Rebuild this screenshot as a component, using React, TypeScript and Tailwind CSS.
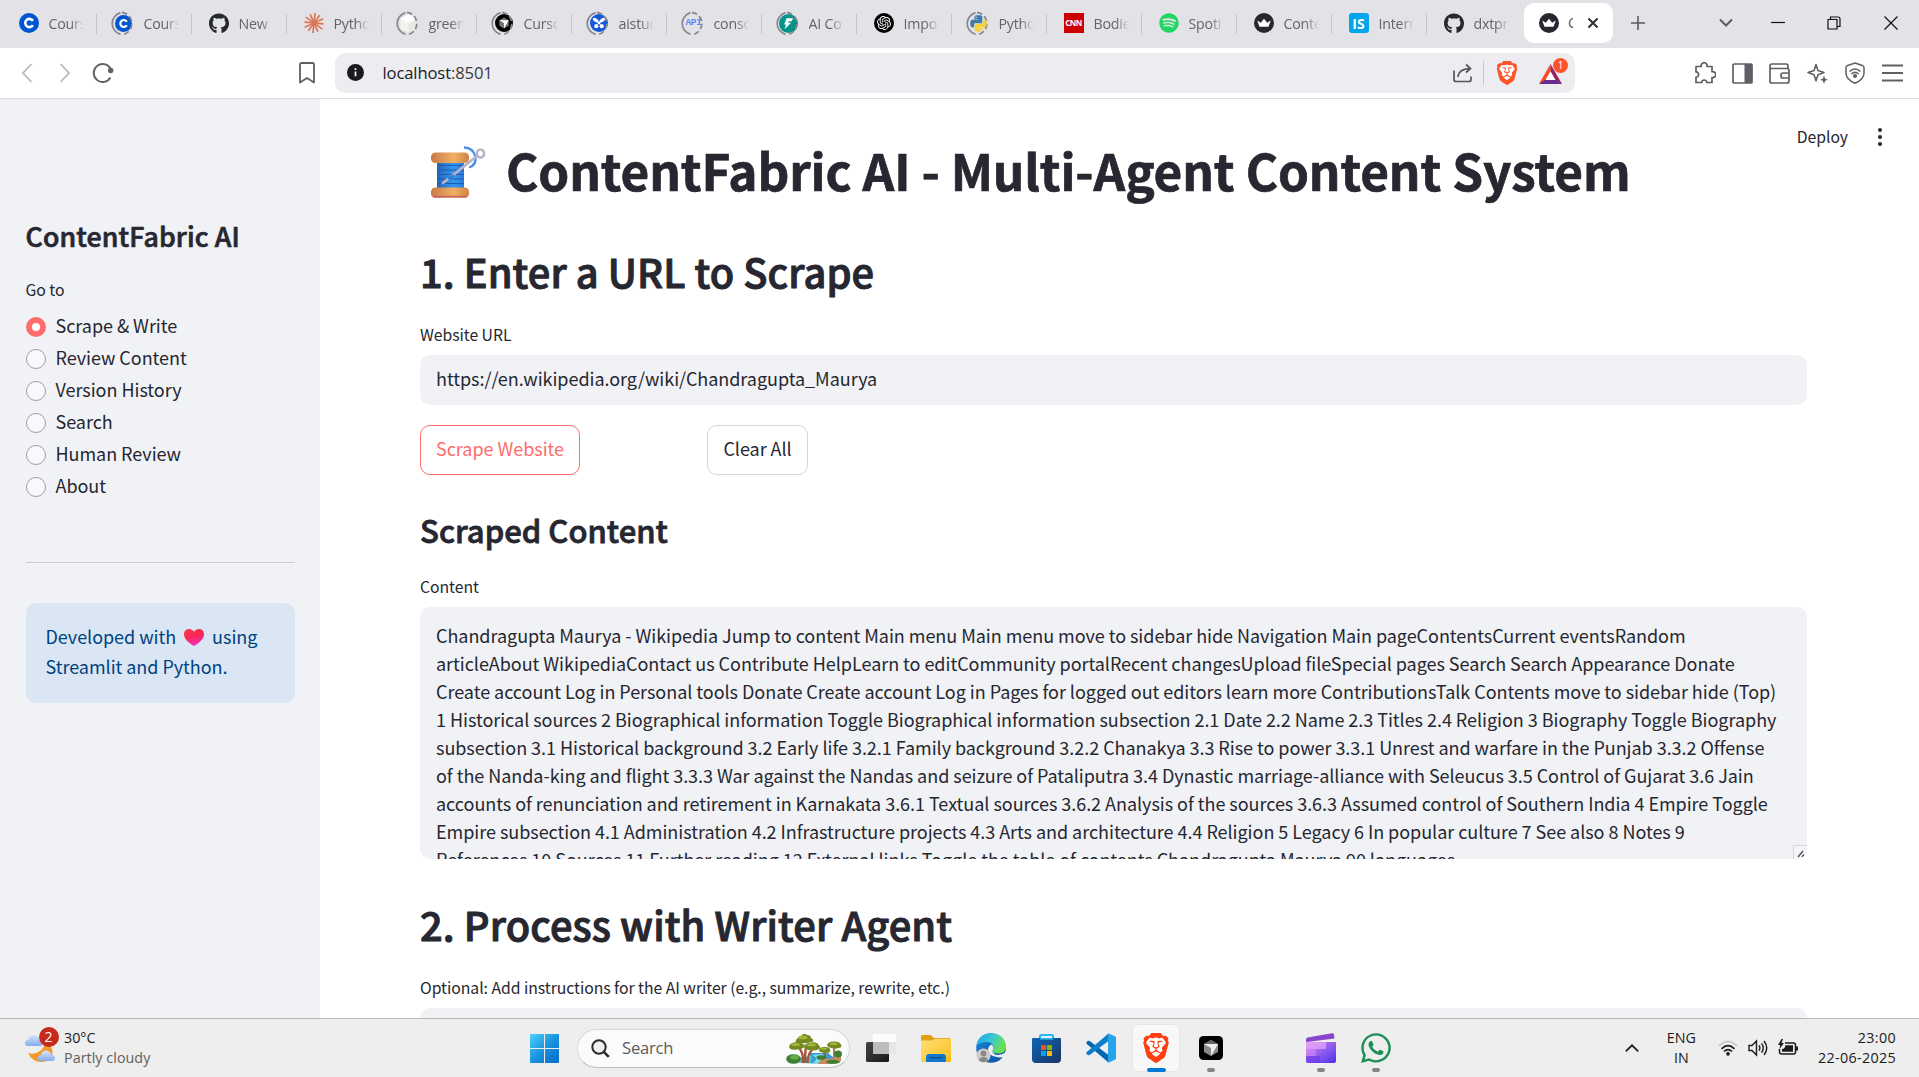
import type { ReactNode } from "react";
import { FaGithub, FaSpotify, FaWhatsapp, FaPython } from "react-icons/fa";
import { SiOpenai, SiBrave } from "react-icons/si";

/* ---------- favicons ---------- */

function CourseraIcon({ small }: { small?: boolean }) {
  return (
    <svg viewBox="0 0 20 20" className={small ? "size-[17px]" : "size-5"}>
      <circle cx="10" cy="10" r="10" fill="#0056d2" />
      <path d="M13.9 12.1A4.1 4.1 0 1 1 13.9 7.9" fill="none" stroke="#fff" strokeWidth="2.6" />
    </svg>
  );
}

function ClaudeIcon() {
  const rays = [0, 30, 60, 90, 120, 150, 180, 210, 240, 270, 300, 330];
  return (
    <svg viewBox="0 0 20 20" className="size-5">
      {rays.map((a, i) => (
        <line key={a} x1="10" y1="9" x2="10" y2={i % 2 ? 1 : 0.4} stroke="#d97757" strokeWidth="1.7" strokeLinecap="round" transform={`rotate(${a + 6} 10 10)`} />
      ))}
    </svg>
  );
}

function CubeIcon() {
  return (
    <svg viewBox="0 0 20 20" className="size-[19px]">
      <path d="M10 .5l8.500 4.500v10L10 19.500 1.500 15V5z" fill="#f4f3ef" />
      <path d="M10 .5l8.500 4.500L10 9.500 1.500 5z" fill="#fff" />
      <path d="M10 9.500L18.500 5v10L10 19.500z" fill="#e9e8e2" />
    </svg>
  );
}

function CursorDisc() {
  return (
    <svg viewBox="0 0 20 20" className="size-[18px]">
      <circle cx="10" cy="10" r="10" fill="#000" />
      <path d="M10 4l5.200 3v6L10 16l-5.200-3V7z" fill="#777" />
      <path d="M4.800 7h10.400L10 16v-6z" fill="#fff" />
    </svg>
  );
}

function AiStudioIcon() {
  return (
    <svg viewBox="0 0 20 20" className="size-[18px]">
      <circle cx="10" cy="10" r="10" fill="#1257d8" />
      <g fill="#fff">
        <ellipse cx="6.300" cy="6.800" rx="3.600" ry="1.900" transform="rotate(35 6.300 6.800)" />
        <ellipse cx="13.700" cy="6.800" rx="3.600" ry="1.900" transform="rotate(-35 13.700 6.800)" />
        <circle cx="7" cy="13.500" r="2.300" />
        <circle cx="13" cy="13.500" r="2.300" />
        <circle cx="10" cy="10" r="1.600" />
      </g>
    </svg>
  );
}

function BoltIcon() {
  return (
    <svg viewBox="0 0 20 20" className="size-[19px]">
      <circle cx="10" cy="10" r="10" fill="#059487" />
      <path d="M8 4.500h7l-1.800 3.200h-3l-.4 1.500h3l-7 6.800 1.600-5h-2z" fill="#fff" />
    </svg>
  );
}

function CrownIcon() {
  return (
    <svg viewBox="0 0 20 20" className="size-5">
      <circle cx="10" cy="10" r="10" fill="#262730" />
      <path d="M3.200 7.500l3.600 2.200L10 5.800l3.200 3.900 3.600-2.200-2.300 6.300h-9z" fill="#fff" />
    </svg>
  );
}

function PythonIcon() {
  return (
    <div className="relative size-[19px]">
      <FaPython className="absolute inset-0 size-[19px] text-[#3d7ab0] [clip-path:polygon(0_0,100%_0,100%_24%,72%_24%,72%_50%,28%_50%,28%_76%,0_76%)]" />
      <FaPython className="absolute inset-0 size-[19px] text-[#fbd03d] [clip-path:polygon(100%_24%,72%_24%,72%_50%,28%_50%,28%_76%,10%_76%,10%_100%,100%_100%)]" />
    </div>
  );
}

function Ring({ children }: { children: ReactNode }) {
  return (
    <div className="relative flex size-5 items-center justify-center">
      <svg viewBox="0 0 25 25" className="absolute -left-[2.5px] -top-[2.5px] size-[25px] max-w-none">
        <path d="M9.500 1.600A11.300 11.300 0 0 0 9.500 23.400" fill="none" stroke="#85858c" strokeWidth="1.700" />
        <path d="M11 1.300A11.300 11.300 0 0 1 11 23.700" fill="none" stroke="#85858c" strokeWidth="1.700" strokeDasharray="5.500 2.700" />
      </svg>
      {children}
    </div>
  );
}

const tabs: { label: string; icon: ReactNode }[] = [
  { label: "Cours", icon: <CourseraIcon /> },
  { label: "Cours", icon: <Ring><CourseraIcon small /></Ring> },
  { label: "New", icon: <FaGithub className="size-[21px] text-[#24292f]" /> },
  { label: "Pytho", icon: <ClaudeIcon /> },
  { label: "green", icon: <Ring><CubeIcon /></Ring> },
  { label: "Curso", icon: <Ring><CursorDisc /></Ring> },
  { label: "aistud", icon: <Ring><AiStudioIcon /></Ring> },
  { label: "conso", icon: <Ring><span className="font-['Liberation_Mono'] text-[9.500px] font-bold tracking-[-0.3px] text-[#5b86f7]">API</span></Ring> },
  { label: "AI Co", icon: <Ring><BoltIcon /></Ring> },
  { label: "Impo", icon: <div className="flex size-5 items-center justify-center rounded-full bg-black"><SiOpenai className="size-[14px] text-white" /></div> },
  { label: "Pytho", icon: <Ring><PythonIcon /></Ring> },
  { label: "Bodie", icon: <div className="flex size-5 items-center justify-center bg-[#cc0000] text-[8px] font-bold tracking-[-0.6px] text-white">CNN</div> },
  { label: "Spoti", icon: <FaSpotify className="size-5 text-[#1ed760]" /> },
  { label: "Conte", icon: <CrownIcon /> },
  { label: "Intern", icon: <div className="flex size-5 items-center justify-center rounded-[3px] bg-[#00a5ec] text-[14px] font-bold text-white">IS</div> },
  { label: "dxtpr", icon: <FaGithub className="size-[21px] text-[#24292f]" /> },
];

function TabStrip() {
  return (
    <div className="flex h-12 items-center bg-[#e3e2e7] font-['Open_Sans',sans-serif]">
      {tabs.map((t, i) => (
        <div key={i} className="flex w-[95px] items-center">
          <div className="mb-px ml-[18.500px] flex size-5 items-center justify-center">{t.icon}</div>
          <div className="mb-px ml-2.5 w-[35px] overflow-hidden whitespace-nowrap text-[14.200px] tracking-[-0.2px] text-[#63636b] [mask-image:linear-gradient(to_right,black_62%,transparent_100%)]">{t.label}</div>
          <div className={i === 15 ? "hidden" : "ml-auto mr-[-1.500px] h-5 w-px bg-[#c6c5cb]"} />
        </div>
      ))}
      <div className="ml-1 mb-[2px] flex h-10 w-[89px] items-center rounded-[10px] bg-white">
        <div className="ml-[15px]"><CrownIcon /></div>
        <div className="ml-[9px] w-[5px] overflow-hidden text-[14.200px] text-[#55555c]">C</div>
        <svg viewBox="0 0 12 12" className="ml-[13.500px] size-3"><path d="M1.500 1.500l9 9m0-9l-9 9" stroke="#2e2f33" strokeWidth="2" /></svg>
      </div>
      <svg viewBox="0 0 14 14" className="mb-[2px] ml-[18px] w-[14px]"><path d="M7 0v14M0 7h14" stroke="#5a5a61" strokeWidth="1.600" /></svg>
      <svg viewBox="0 0 14 10" className="mb-[2px] ml-[74px] w-[14px]"><path d="M1 1.500l6 6 6-6" fill="none" stroke="#5a5a61" strokeWidth="2" /></svg>
      <svg viewBox="0 0 14 14" className="mb-[4px] ml-[37.500px] w-[14px]"><path d="M0 7.500h14" stroke="#111" strokeWidth="1.200" /></svg>
      <svg viewBox="0 0 14 14" className="mb-[2px] ml-[42px] w-[14px]"><path d="M1 3.500h9v9.500h-9zM3.500 3.500v-2.500h7.500q2 0 2 2v7.500h-2.800" fill="none" stroke="#111" strokeWidth="1.200" /></svg>
      <svg viewBox="0 0 14 14" className="mb-[2px] ml-[43.500px] w-[14px]"><path d="M.5.5l13 13m0-13l-13 13" stroke="#111" strokeWidth="1.200" /></svg>
    </div>
  );
}

/* ---------- toolbar ---------- */

function Cell({ className, children }: { className: string; children: ReactNode }) {
  return <div className={`flex h-full shrink-0 items-center justify-center ${className}`}>{children}</div>;
}

function Toolbar() {
  return (
    <div className="flex h-[51px] items-center border-b border-[#dddde0] bg-white">
      <Cell className="ml-2 w-[38px]"><svg viewBox="0 0 12 20" className="w-3" fill="none" stroke="#b9b9bd" strokeWidth="1.800"><path d="M10.500 1L2 10l8.500 9" /></svg></Cell>
      <Cell className="w-[38px]"><svg viewBox="0 0 12 20" className="w-3" fill="none" stroke="#b9b9bd" strokeWidth="1.800"><path d="M1.500 1L10 10l-8.500 9" /></svg></Cell>
      <Cell className="w-[37px]">
        <svg viewBox="0 0 22 22" className="w-[22px]" fill="none" stroke="#5f6066" strokeWidth="1.900"><path d="M18.500 15.500A9 9 0 1 1 18.500 6.500" /><circle cx="18.700" cy="8.500" r="2.700" fill="#5f6066" stroke="none" /></svg>
      </Cell>
      <Cell className="ml-[165.500px] w-10">
        <svg viewBox="0 0 16 22" className="w-4" fill="none" stroke="#5f6066" strokeWidth="1.800"><path d="M1 2.500q0-1.500 1.500-1.500h11q1.500 0 1.500 1.500v18l-7-4.500-7 4.500z" strokeLinejoin="round" /></svg>
      </Cell>
      <div className="mb-[1px] ml-[8.500px] flex h-10 w-[1240px] items-center rounded-[10px] bg-[#edecf1]">
        <svg viewBox="0 0 16 16" className="ml-[11.500px] size-[17px]"><circle cx="8" cy="8" r="8" fill="#1b1b1f" /><path d="M8 7v4.500M8 4v1.600" stroke="#fff" strokeWidth="1.600" /></svg>
        <span className="ml-[19px] pt-px font-['Open_Sans',sans-serif] text-[16.600px] tracking-[-0.12px] text-[#3c3c42]"><span className="text-[#1b1b1f]">localhost</span>:8501</span>
        <svg viewBox="0 0 20 20" className="ml-auto w-5" fill="none" stroke="#55565c" strokeWidth="1.700"><path d="M1 7.500v9q0 2 2 2h13q2 0 2-2v-3M5 14q.5-8 12-8.500M13 1.500l4.500 4-4.500 4" /></svg>
        <div className="ml-[10px] h-6 w-px bg-[#c8c7cc]" />
        <div className="relative ml-[13px] flex h-[22px] w-5 items-center justify-center">
          <div className="absolute inset-x-[4px] inset-y-[3px] bg-white" />
          <SiBrave className="relative h-[24px] w-[24px] shrink-0 text-[#fb542b]" />
        </div>
        <div className="relative ml-[22px] mr-[13px] h-[22px] w-[23px]">
          <svg viewBox="0 0 23 22" className="mt-[1px] w-[23px]">
            <path d="M11.500 1L0 21l6.500-3.500 5-9z" fill="#ff4724" />
            <path d="M11.500 1L23 21l-6.500-3.500-5-9z" fill="#9e1f63" />
            <path d="M0 21h23l-6.500-4.500h-10z" fill="#662d91" />
            <path d="M11.500 8.500l5 8.500h-10z" fill="#fff" />
          </svg>
          <span className="absolute -top-[4px] left-[14px] flex size-[15px] items-center justify-center rounded-full bg-[#fb542b] font-['Open_Sans'] text-[10px] leading-none text-white">1</span>
        </div>
      </div>
      <div className="ml-[111px] flex h-full text-[#5f6066]">
        <Cell className="w-[37.500px]">
          <svg viewBox="0 0 22 22" className="w-[22px]" fill="none" stroke="currentColor" strokeWidth="1.700" strokeLinejoin="round"><path d="M2 4.500h5.200a3 3 0 1 1 5.800 0h5v5.200a3 3 0 1 1 0 5.800v5h-5.200a2.300 2.300 0 1 0-5 0H2v-5.300a2.600 2.600 0 1 0 0-5.300z" /></svg>
        </Cell>
        <Cell className="w-[37.500px]"><svg viewBox="0 0 21 21" className="w-[21px]"><rect x="1" y="1" width="19" height="19" rx="1" fill="none" stroke="currentColor" strokeWidth="1.700" /><rect x="12.500" y="1" width="7.500" height="19" fill="currentColor" /></svg></Cell>
        <Cell className="w-[37.500px]"><svg viewBox="0 0 21 21" className="w-[21px]" fill="none" stroke="currentColor" strokeWidth="1.700"><path d="M19 5.500v-2.500q0-2-2-2H3q-2 0-2 2v15q0 2 2 2h15q2 0 2-2v-10.500q0-2-2-2H1M20 10h-6q-2 0-2 2v1q0 2 2 2h6" /></svg></Cell>
        <Cell className="w-[37.500px]"><svg viewBox="0 0 21 21" className="w-[21px]"><path d="M9 1.500l2 6 6 2-6 2.200-2 6-2-6-6-2.200 6-2z" fill="none" stroke="currentColor" strokeWidth="1.600" strokeLinejoin="round" /><path d="M17 12.500l1.200 3.200 2.800 1-2.800 1.100-1.200 3.200-1.200-3.200-2.800-1.100 2.800-1z" fill="currentColor" /></svg></Cell>
        <Cell className="w-[37.500px]"><svg viewBox="0 0 20 22" className="w-5" fill="none" stroke="currentColor" strokeWidth="1.500"><path d="M10 1l8 2.800q1 .5 1 1.700v5.500q0 6.500-9 10.200-9-3.700-9-10.200V5.500q0-1.200 1-1.700z" /><path d="M4.500 9.500q5.500-5 11 0M6.300 12q3.700-3.300 7.400 0" /><circle cx="10" cy="14" r="1.300" fill="currentColor" /></svg></Cell>
        <Cell className="w-[37.500px]"><svg viewBox="0 0 21 18" className="w-[21px]" stroke="currentColor" strokeWidth="1.800"><path d="M0 1.500h21M0 9h21M0 16.500h21" /></svg></Cell>
      </div>
    </div>
  );
}

/* ---------- sidebar ---------- */

const pages = ["Scrape & Write", "Review Content", "Version History", "Search", "Human Review", "About"];

function Sidebar() {
  return (
    <aside className="flex w-80 shrink-0 flex-col bg-[#f0f2f6] pl-[25.500px] pr-[25px]">
      <h2 className="mt-[119px] h-9 whitespace-nowrap text-[26.700px] font-medium leading-9 tracking-[0.14px] [-webkit-text-stroke:0.7px_#262730]">ContentFabric AI</h2>
      <p className="mt-6 h-6 text-[15.750px] leading-6">Go to</p>
      <div className="mt-2">
        {pages.map((p, i) => (
          <div key={p} className="flex h-8 items-center pt-px">
            {i === 0 ? (
              <span className="flex size-5 items-center justify-center rounded-full bg-[#ff6c6c]"><span className="size-[8px] rounded-full bg-white" /></span>
            ) : (
              <span className="size-5 rounded-full border border-[#9c9ea3] bg-[#f9f9fb]" />
            )}
            <span className="ml-2.5 pb-[3px] leading-7">{p}</span>
          </div>
        ))}
      </div>
      <div className="mt-[60px] h-px bg-[#cbcdd2]" />
      <div className="mt-10 h-[100px] whitespace-nowrap rounded-[10px] bg-[#dae6f4] px-5 pt-[18px] leading-[30px] text-[#004280]">
        Developed with
        <svg viewBox="0 0 20 18" className="mx-2 inline-block h-[17px] w-5 align-[-2px]" preserveAspectRatio="none">
          <defs><linearGradient id="heart" x1="0" y1="0" x2=".3" y2="1"><stop offset="0" stopColor="#fb3a55" /><stop offset=".5" stopColor="#f8294f" /><stop offset="1" stopColor="#f32fb6" /></linearGradient></defs>
          <path d="M10 18C3 13.500 0 9.500 0 5.300 0 2 2.300 0 5 0c2.300 0 4 1.200 5 3 1-1.800 2.700-3 5-3 2.700 0 5 2 5 5.300 0 4.200-3 8.200-10 12.700z" fill="url(#heart)" />
        </svg>
        using<br />Streamlit and Python.
      </div>
    </aside>
  );
}

/* ---------- main content ---------- */

function ThreadEmoji() {
  return (
    <svg viewBox="0 0 55 53" className="h-[53px] w-[55px]">
      <defs>
        <linearGradient id="wood" x1="0" y1="0" x2="1" y2="0"><stop offset="0" stopColor="#c77a48" /><stop offset=".6" stopColor="#f2b163" /><stop offset="1" stopColor="#cf8248" /></linearGradient>
        <linearGradient id="thread" x1="0" y1="0" x2="1" y2="0"><stop offset="0" stopColor="#2464b8" /><stop offset=".6" stopColor="#3598f2" /><stop offset="1" stopColor="#2b7bd8" /></linearGradient>
      </defs>
      <path d="M33 1.500q9 .5 11 8 2.500 9-6 12" fill="none" stroke="#4a90ea" strokeWidth="2.300" />
      <rect x="6" y="14" width="27" height="30" fill="url(#thread)" />
      <path d="M6 19.500h27M6 24h27M6 28.500h27M6 33h27M6 37.500h27" stroke="#1e5cae" strokeWidth="1.200" />
      <rect x="0" y="6.500" width="38" height="10.500" rx="4.500" fill="url(#wood)" />
      <rect x="0" y="41.500" width="38" height="10.500" rx="4.500" fill="url(#wood)" />
      <path d="M3 50.500h32" stroke="#c9606a" strokeWidth="1.600" strokeLinecap="round" />
      <path d="M12 37L46 10" stroke="#bab5c6" strokeWidth="2.800" strokeLinecap="round" />
      <path d="M17 32.500l6-3" stroke="#2c7fdc" strokeWidth="3" />
      <ellipse cx="49.500" cy="7.500" rx="3.600" ry="4" fill="#fff" stroke="#bab5c6" strokeWidth="2.600" />
    </svg>
  );
}

const scraped = [
  "Chandragupta Maurya - Wikipedia Jump to content Main menu Main menu move to sidebar hide Navigation Main pageContentsCurrent eventsRandom",
  "articleAbout WikipediaContact us Contribute HelpLearn to editCommunity portalRecent changesUpload fileSpecial pages Search Search Appearance Donate",
  "Create account Log in Personal tools Donate Create account Log in Pages for logged out editors learn more ContributionsTalk Contents move to sidebar hide (Top)",
  "1 Historical sources 2 Biographical information Toggle Biographical information subsection 2.1 Date 2.2 Name 2.3 Titles 2.4 Religion 3 Biography Toggle Biography",
  "subsection 3.1 Historical background 3.2 Early life 3.2.1 Family background 3.2.2 Chanakya 3.3 Rise to power 3.3.1 Unrest and warfare in the Punjab 3.3.2 Offense",
  "of the Nanda-king and flight 3.3.3 War against the Nandas and seizure of Pataliputra 3.4 Dynastic marriage-alliance with Seleucus 3.5 Control of Gujarat 3.6 Jain",
  "accounts of renunciation and retirement in Karnakata 3.6.1 Textual sources 3.6.2 Analysis of the sources 3.6.3 Assumed control of Southern India 4 Empire Toggle",
  "Empire subsection 4.1 Administration 4.2 Infrastructure projects 4.3 Arts and architecture 4.4 Religion 5 Legacy 6 In popular culture 7 See also 8 Notes 9",
  "References 10 Sources 11 Further reading 12 External links Toggle the table of contents Chandragupta Maurya 90 languages",
];

function Main() {
  return (
    <main className="relative min-w-0 flex-1 overflow-hidden bg-white pl-[100px] pr-28">
      <div className="absolute right-0 top-0 flex items-center pr-[37px] pt-[26px]">
        <span className="mr-[30px] text-[15.750px] leading-6">Deploy</span>
        <svg viewBox="0 0 4 18" className="w-1" fill="#262730"><circle cx="2" cy="2" r="2" /><circle cx="2" cy="9" r="2" /><circle cx="2" cy="16" r="2" /></svg>
      </div>
      <h1 className="mt-[41px] flex h-[60px] items-center whitespace-nowrap text-[49.500px] font-bold leading-[60px] tracking-[-0.13px] [-webkit-text-stroke:0.7px_#262730]">
        <span className="ml-[11px] mr-[20px] mt-[5px]"><ThreadEmoji /></span>
        ContentFabric AI - Multi-Agent Content System
      </h1>
      <h2 className="mt-[46px] h-[50px] text-[39.800px] font-medium leading-[50px] tracking-[0.08px] [-webkit-text-stroke:1px_#262730]">1. Enter a URL to Scrape</h2>
      <p className="mt-[27px] h-6 text-[15.750px] leading-6 tracking-[-0.04px]">Website URL</p>
      <div className="mt-2 flex h-[50px] items-center rounded-[10px] bg-[#f0f2f6] px-4 pb-[3px]">https://en.wikipedia.org/wiki/Chandragupta_Maurya</div>
      <div className="mt-5 flex h-[50px]">
        <button className="flex w-40 items-center justify-center rounded-[10px] border border-[#ff6c6c] pb-[3px] text-[#ff6c6c]">Scrape Website</button>
        <button className="ml-[127px] flex w-[101px] items-center justify-center rounded-[10px] border border-[#d4d4d6] pb-[3px]">Clear All</button>
      </div>
      <h3 className="mt-[35px] h-10 text-[31px] font-medium leading-10 tracking-[0.03px] [-webkit-text-stroke:0.8px_#262730]">Scraped Content</h3>
      <p className="mt-[25px] h-6 text-[15.750px] leading-6">Content</p>
      <div className="relative mt-2 h-[252px] overflow-hidden whitespace-nowrap rounded-[10px] bg-[#f0f2f6] px-4 pt-[14px] leading-7">
        {scraped.map((line) => <div key={line}>{line}</div>)}
        <div className="absolute bottom-0 right-0 size-3.5 border-l border-t border-[#d3d5da] bg-[#f4f5f8]">
          <svg viewBox="0 0 12 12" className="size-3"><path d="M4 11L9 5M8 11l2-2.500" stroke="#55565c" strokeWidth="1.500" /></svg>
        </div>
      </div>
      <h2 className="mt-10 h-[50px] text-[39.800px] font-medium leading-[50px] tracking-[0.11px] [-webkit-text-stroke:1px_#262730]">2. Process with Writer Agent</h2>
      <p className="mt-[27px] h-6 text-[15.750px] leading-6 tracking-[-0.04px]">Optional: Add instructions for the AI writer (e.g., summarize, rewrite, etc.)</p>
      <div className="mt-2 h-[50px] rounded-[10px] bg-[#f0f2f6]" />
    </main>
  );
}

/* ---------- taskbar ---------- */

function TreesArt() {
  return (
    <svg viewBox="0 0 56 31" className="h-[31px] w-14">
      <ellipse cx="30" cy="27" rx="24" ry="3.500" fill="#4fc3d9" />
      <path d="M22 20h20l6 5-10 5H24l2-5z" fill="#3a9fd0" />
      <path d="M26 22q8 3 0 9h14q2-5-4-10z" fill="#7fdcec" />
      <path d="M16.500 30q2-10-5-17M19 30q0-9 1-18M21.500 30q0-10 7-16" fill="none" stroke="#a5553c" strokeWidth="2.400" />
      <path d="M48 27V14M40 27l-2-9" stroke="#a5553c" strokeWidth="1.600" />
      <g fill="#728a1f">
        <path d="M10 7q2-3 5-4 3-4 6-1 4 0 4 3 3 1 2 3.500-8 3-16 1-2-1-1-2.500z" />
        <path d="M3 13.500q1-3.500 5-4 4-1.500 7 .5 4 1 3.500 4-4 3-8 2.500-7 1-7.500-3z" />
        <path d="M18 13.500q2-4 7-4 6-1 7.500 2.500 2.500 2 1 4-6 2.500-10 1-5 0-5.500-3.500z" />
        <path d="M41 11.500q2-3 6-3 6-.5 7 2 2.500 2 .5 4-5 2-9 .5-4-.5-4.500-3.500z" />
        <path d="M33 17q1-3 5-3 5-.5 6 2 1 2-1 3.500-4 1-6.500 0-3 0-3.500-2.500z" />
      </g>
      <g fill="#a3b535"><ellipse cx="17" cy="4.500" rx="4.500" ry="1.900" /><ellipse cx="9.500" cy="11.500" rx="4.500" ry="1.600" /><ellipse cx="25.500" cy="11.800" rx="4.500" ry="1.600" /><ellipse cx="47.500" cy="10.800" rx="4" ry="1.300" /><ellipse cx="38" cy="15.800" rx="3" ry="1" /></g>
      <path d="M32 31q2-6 11-5l12-3v5q-4 3-10 3z" fill="#c98a5d" />
      <g fill="#3f7f35"><ellipse cx="7.500" cy="26" rx="7.300" ry="4.800" /><ellipse cx="52" cy="21" rx="4" ry="3.500" /><ellipse cx="35" cy="24.500" rx="4.500" ry="2.300" /><ellipse cx="47" cy="28.800" rx="7" ry="2" /></g>
      <ellipse cx="8.500" cy="24.300" rx="4.500" ry="2.300" fill="#69ab4a" />
    </svg>
  );
}

function Slot({ children, indicator }: { children?: ReactNode; indicator?: ReactNode }) {
  return (
    <div className="relative flex h-full w-[55px] shrink-0 items-center justify-center">
      {children}
      {indicator && <div className="absolute bottom-[5px] left-0 flex w-full justify-center">{indicator}</div>}
    </div>
  );
}

const dot = <span className="h-1 w-2 rounded-full bg-[#858585]" />;

function Taskbar() {
  return (
    <div className="flex h-[59px] items-center border-t border-[#b9b9bb] bg-[#eeeeee] font-['Open_Sans',sans-serif]">
      <div className="relative -top-[3px] ml-[25px] h-9 w-[39px]">
        <svg viewBox="0 0 34 36" className="h-9 w-[34px]">
          <defs><linearGradient id="cloud" x1="0" y1="0" x2="0" y2="1"><stop offset="0" stopColor="#d6e4fb" /><stop offset="1" stopColor="#86abed" /></linearGradient></defs>
          <path d="M3 26q7 2 12-2 4-3 5-8 8 3 7.500 10-1 7.500-9.500 9-10 1-15-9z" fill="#f39a27" />
          <path d="M3 19q-3-.3-3-3 0-3 3.200-3.200Q4.500 8 9 8q4.500 0 5.500 4.800Q18 13 18 16q0 3-3 3z" fill="url(#cloud)" />
          <path d="M15.500 34q-3-.3-3-2.800 0-2.800 3.200-3Q17 23.500 21 23.500q4 0 5 4.200 4 .3 4 3.300 0 3-3 3z" fill="url(#cloud)" />
        </svg>
        <span className="absolute left-[13.500px] top-0 flex size-5 items-center justify-center rounded-full bg-[#c42b1c] text-[14px] leading-none text-white">2</span>
      </div>
      <div className="w-[200px] pb-px text-[14.300px] leading-5 text-[#1b1b1b]">
        30°C<br /><span className="tracking-[0.05px] text-[#606060]">Partly cloudy</span>
      </div>
      <svg viewBox="0 0 29 29" className="ml-[266px] size-[29px]">
        <defs><linearGradient id="win" gradientUnits="userSpaceOnUse" x1="0" y1="0" x2="29" y2="29"><stop offset="0" stopColor="#4fd0ff" /><stop offset=".5" stopColor="#1a94de" /><stop offset="1" stopColor="#0669c9" /></linearGradient></defs>
        <path d="M1 0h13v14H0V1q0-1 1-1zM15 0h13q1 0 1 1v13H15zM0 15h14v14H1q-1 0-1-1zM15 15h14v13q0 1-1 1H15z" fill="url(#win)" />
      </svg>
      <div className="ml-[17.500px] flex h-[39px] w-[273px] items-center rounded-full border border-[#d8d8d8] border-b-[#bdbdbd] bg-[#fbfbfb]">
        <svg viewBox="0 0 19 19" className="ml-[13px] size-[19px]" fill="none" stroke="#2b2b2b"><circle cx="8" cy="8" r="6.700" strokeWidth="2" fill="#eef0f2" /><path d="M12.800 12.800l5 5" strokeWidth="2.600" /></svg>
        <span className="ml-[12.500px] pt-px text-[16.600px] tracking-[-0.2px] text-[#5c5c5c]">Search</span>
        <div className="ml-auto mr-[7px]"><TreesArt /></div>
      </div>
      <div className="ml-1 flex h-full">
        <Slot>
          <svg viewBox="0 0 30 28" className="h-7 w-[30px]">
            <defs><linearGradient id="tvd" x1="0" y1="0" x2="1" y2="1"><stop offset="0" stopColor="#444" /><stop offset="1" stopColor="#1a1a1a" /></linearGradient></defs>
            <rect x="0" y="8" width="23" height="20" rx="1.500" fill="url(#tvd)" /><rect x="7" y="0" width="23" height="20" rx="1.500" fill="#fff" fillOpacity=".8" /><rect x="7" y="8" width="16" height="12" fill="#bdbdbd" />
            <rect x="23" y="8" width="7" height="12" rx="1" fill="#e6e6e6" />
          </svg>
        </Slot>
        <Slot>
          <svg viewBox="0 0 30 27" className="h-[27px] w-[30px]">
            <defs><linearGradient id="fold" x1="0" y1="0" x2="1" y2="1"><stop offset="0" stopColor="#ffe07a" /><stop offset="1" stopColor="#fcbc19" /></linearGradient></defs>
            <path d="M0 1.500Q0 0 1.500 0H9q1.500 0 2.500 1.500L13 3h15q1.500 0 1.500 1.500V10H0z" fill="#e0a012" /><path d="M0 5.500h11l2.500-1.800H29q1 0 1 1V26q0 1-1 1H1q-1 0-1-1z" fill="url(#fold)" />
            <path d="M5 27v-5q0-3 3-3h14q3 0 3 3v5z" fill="#1279cc" /><path d="M9 22.800h12" stroke="#0a4d8c" strokeWidth="1.400" strokeLinecap="round" />
          </svg>
        </Slot>
        <Slot>
          <svg viewBox="0 0 30 30" className="size-[30px]">
            <defs>
              <linearGradient id="e1" x1="0" y1="0" x2="1" y2=".4"><stop offset="0" stopColor="#1aa0e0" /><stop offset=".5" stopColor="#34c5dd" /><stop offset="1" stopColor="#6be04f" /></linearGradient>
              <linearGradient id="e2" x1="0" y1="0" x2="1" y2="1"><stop offset="0" stopColor="#1a86d8" /><stop offset="1" stopColor="#0c4fa5" /></linearGradient>
            </defs>
            <circle cx="15" cy="15" r="14.800" fill="url(#e2)" />
            <path d="M.3 13Q3 0 15.500.2 29 1 30 13.500q0 6.500-7 7-7 .2-7-2.500 2-1.500 1.500-4Q16.500 9 11 9 4 9 .3 13z" fill="url(#e1)" />
            <path d="M12 17.500q0-5 4-6 2.500 4 .2 6.500Q17 22 22 22q5 0 8.500-3.500l-1.500 5q-4 1.500-8.500.5-8-1.500-8.500-6.500z" fill="#eeeeee" />
            <circle cx="7.500" cy="22.500" r="7" fill="#cfcdca" /><circle cx="7.500" cy="20.500" r="2.900" fill="#8b8885" /><path d="M2.800 27.500q.5-3.500 4.700-3.500t4.700 3.500q-4.700 3.500-9.400 0z" fill="#8b8885" />
          </svg>
        </Slot>
        <Slot>
          <svg viewBox="0 0 29 29" className="size-[29px]">
            <defs><linearGradient id="st" x1="0" y1="0" x2="1" y2="1"><stop offset="0" stopColor="#0c66b5" /><stop offset="1" stopColor="#1d3563" /></linearGradient></defs>
            <path d="M8 6V2q0-1 1-1h11q1 0 1 1v4" fill="none" stroke="#28b8f0" strokeWidth="2" /><path d="M0 5q0-1 1-1h27q1 0 1 1v20q0 4-4 4H4q-4 0-4-4z" fill="url(#st)" />
            <path d="M8 4h13v1.600H8z" fill="#28b8f0" />
            <rect x="9" y="11" width="5" height="5" fill="#f25022" /><rect x="15" y="11" width="5" height="5" fill="#7fba00" /><rect x="9" y="17" width="5" height="5" fill="#00a4ef" /><rect x="15" y="17" width="5" height="5" fill="#ffb900" />
          </svg>
        </Slot>
        <Slot>
          <svg viewBox="0 0 30 30" className="size-[30px]">
            <path d="M1 8.500q1.500-1.500 3-.3L22.500 22v7.500L.8 11Q-.3 9.700 1 8.500z" fill="#0067b0" />
            <path d="M1 21.500q1.500 1.500 3 .3L22.500 8V.5L.8 19Q-.3 20.300 1 21.500z" fill="#0b80c9" />
            <path d="M22 .3l7 3q1 .5 1 1.700v20q0 1.200-1 1.700l-7 3z" fill="#28a4ee" />
          </svg>
        </Slot>
        <Slot indicator={<span className="h-1 w-[19px] rounded-full bg-[#0078d4]" />}>
          <div className="flex h-12 w-12 items-center justify-center rounded-md border border-[#e6e6e6] bg-[#f8f8f8]">
            <div className="relative flex size-[30px] items-center justify-center"><div className="absolute inset-x-[6px] inset-y-[5px] bg-white" /><SiBrave className="relative size-[30px] text-[#fd3f12]" /></div>
          </div>
        </Slot>
        <Slot indicator={dot}>
          <svg viewBox="0 0 24 24" className="size-6"><rect width="24" height="24" rx="4.500" fill="#000" /><path d="M12 4l7 4v8l-7 4-7-4V8z" fill="#8a8a8a" /><path d="M5 8h14l-7 12v-8z" fill="#eee" /><path d="M12 4l7 4H5z" fill="#666" /></svg>
        </Slot>
        <Slot />
        <Slot indicator={dot}>
          <svg viewBox="0 0 30 30" className="size-[30px]">
            <defs><linearGradient id="cc" x1="0" y1="0" x2="1" y2="1"><stop offset="0" stopColor="#d98cf5" /><stop offset="1" stopColor="#4a30e8" /></linearGradient></defs>
            <path d="M0 6.500q0-1.500 1.500-2L26 .2q1.500-.3 2 1L28.500 5.500 1 9q-1 0-1-1z" fill="#8a45cf" />
            <path d="M0 9h30v19q0 2-2 2H2q-2 0-2-2z" fill="url(#cc)" /><path d="M0 9h20v7H0z" fill="#e9a6fa" fillOpacity=".7" /><path d="M0 16h10v7H0z" fill="#e08cf5" fillOpacity=".5" /><path d="M0 23h14v7H2q-2 0-2-2z" fill="#6a35e8" fillOpacity=".6" />
          </svg>
        </Slot>
        <Slot indicator={dot}><FaWhatsapp className="size-[34px] text-[#1f8f56]" /></Slot>
      </div>
      <div className="ml-auto mr-[23px] flex items-center text-[#1b1b1b]">
        <svg viewBox="0 0 14 8" className="mr-[28px] w-[14px]" fill="none" stroke="#1b1b1b" strokeWidth="1.700"><path d="M.8 7.300L7 1.300l6.200 6" /></svg>
        <div className="mr-[22px] text-center text-[14.300px] leading-5">ENG<br />IN</div>
        <svg viewBox="0 0 20 16" className="mr-[10px] w-5" fill="none" stroke="#1b1b1b" strokeWidth="1.600"><path d="M.8 6Q10-3 19.200 6" stroke="#c4c4c4" /><path d="M3.500 8.800q6.500-6.200 13 0M6 11.500q4-3.800 8 0" /><circle cx="10" cy="13.800" r="1.900" fill="#1b1b1b" stroke="none" /></svg>
        <svg viewBox="0 0 20 18" className="mr-[10px] w-5" fill="none" stroke="#1b1b1b" strokeWidth="1.400"><path d="M1 6.500h3L8.500 2v14L4 11.500H1zM11 6.500q1.800 2.500 0 5M13.500 4.300q3.500 4.700 0 9.400M16 2q5.500 7 0 14" /></svg>
        <svg viewBox="0 0 20 18" className="mr-[20px] w-5"><path d="M7 4h8.500q2 0 2 2v7q0 2-2 2H3.500q-2 0-2-2v-3" fill="none" stroke="#1b1b1b" strokeWidth="1.500" /><path d="M7.500 6.300h7.500v6.400H4V10q3 0 3.500-3.700z" fill="#1b1b1b" /><path d="M18 7.500h2v4h-2zM3.500 0L0 6h2.200L1.500 10l4.500-6H3.500L5 0z" fill="#1b1b1b" /></svg>
        <div className="pb-px text-right text-[14.300px] leading-5 tracking-[0.35px]">23:00<br />22-06-2025</div>
      </div>
    </div>
  );
}

export default function App() {
  return (
    <div className="flex h-[1077px] w-[1919px] flex-col overflow-hidden bg-white">
      <TabStrip />
      <Toolbar />
      <div className="flex h-[919px] overflow-hidden font-['Noto_Sans_CJK_SC',sans-serif] text-[18px] tracking-[-0.04px] text-[#262730]">
        <Sidebar />
        <Main />
      </div>
      <Taskbar />
    </div>
  );
}
